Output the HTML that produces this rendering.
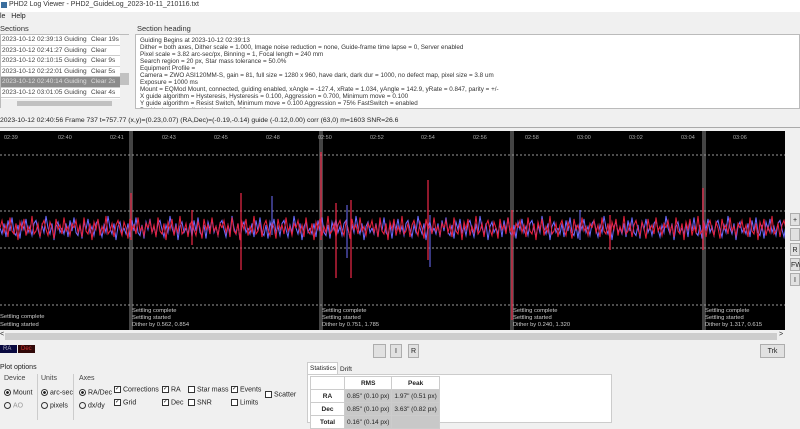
<!DOCTYPE html>
<html><head><meta charset="utf-8"><style>
*{box-sizing:border-box;margin:0;padding:0}
body{width:800px;height:423px;overflow:hidden;background:#f0f0f0;font-family:"Liberation Sans",sans-serif;font-size:7px;color:#222;position:relative}
.a{position:absolute;white-space:nowrap}
.row{height:10.5px;line-height:10px;border-bottom:1px solid #ccc;font-size:6.5px;color:#444;padding-left:1px;position:relative;overflow:hidden}
.row span{position:absolute;left:90px;background:inherit}
.btn{position:absolute;background:#e1e1e1;border:1px solid #adadad;text-align:center;font-size:7px;line-height:13px}
.grp{position:absolute;border-left:1px solid #ccc;top:374px;height:46px}
.rad{display:inline-block;width:7px;height:7px;border-radius:50%;border:1px solid #333;vertical-align:middle;margin-right:2px}
.rad.on{background:radial-gradient(#222 35%,#fff 45%)}
.cb{display:inline-block;width:7px;height:7px;border:1px solid #333;vertical-align:middle;margin-right:2px;font-size:6px;line-height:5px;text-align:center;background:#fff}
td{border:1px solid #ccc;font-size:6.5px;height:13px;padding:0 2px}
</style></head><body>
<div class="a" style="left:0;top:0;width:800px;height:12px;background:#fff"></div>
<div class="a" style="left:1px;top:2px;width:6px;height:6px;background:#3b6e9e"></div>
<div class="a" style="left:9px;top:1px;font-size:7px;color:#333">PHD2 Log Viewer - PHD2_GuideLog_2023-10-11_210116.txt</div>
<div class="a" style="left:0;top:13px;font-size:7px">le &nbsp; Help</div>
<div class="a" style="left:0;top:24px;font-size:7.5px;color:#333">Sections</div>
<div class="a" style="left:137px;top:24px;font-size:7.5px;color:#333">Section heading</div>
<div class="a" style="left:0;top:34px;width:129px;height:74px;background:#fff;border:1px solid #bbb">
<div class="row" style="background:#fff">2023-10-12 02:39:13 Guiding<span>Clear 19s</span></div>
<div class="row" style="background:#fff">2023-10-12 02:41:27 Guiding<span>Clear</span></div>
<div class="row" style="background:#fff">2023-10-12 02:10:15 Guiding<span>Clear 9s</span></div>
<div class="row" style="background:#fff">2023-10-12 02:22:01 Guiding<span>Clear 5s</span></div>
<div class="row" style="background:#8c8c8c;color:#ddd">2023-10-12 02:40:14 Guiding<span>Clear 2s</span></div>
<div class="row" style="background:#fff">2023-10-12 03:01:05 Guiding<span>Clear 4s</span></div>
<div class="a" style="left:119px;top:0;width:9px;height:64px;background:#f0f0f0"><div style="margin-top:38px;height:12px;background:#c1c1c1"></div></div>
<div class="a" style="left:0;top:64px;width:128px;height:9px;background:#f0f0f0"><div style="margin:2px 0 0 16px;width:95px;height:5px;background:#c1c1c1"></div></div>
</div>
<div class="a" style="left:135px;top:34px;width:665px;height:75px;background:#fff;border:1px solid #bbb;font-size:6.3px;line-height:7px;padding:2px 4px;color:#333;overflow:hidden">
Guiding Begins at 2023-10-12 02:39:13<br>
Dither = both axes, Dither scale = 1.000, Image noise reduction = none, Guide-frame time lapse = 0, Server enabled<br>
Pixel scale = 3.82 arc-sec/px, Binning = 1, Focal length = 240 mm<br>
Search region = 20 px, Star mass tolerance = 50.0%<br>
Equipment Profile =<br>
Camera = ZWO ASI120MM-S, gain = 81, full size = 1280 x 960, have dark, dark dur = 1000, no defect map, pixel size = 3.8 um<br>
Exposure = 1000 ms<br>
Mount = EQMod Mount, connected, guiding enabled, xAngle = -127.4, xRate = 1.034, yAngle = 142.9, yRate = 0.847, parity = +/-<br>
X guide algorithm = Hysteresis, Hysteresis = 0.100, Aggression = 0.700, Minimum move = 0.100<br>
Y guide algorithm = Resist Switch, Minimum move = 0.100 Aggression = 75% FastSwitch = enabled<br>
Backlash comp = disabled, pulse = 20 ms
</div>
<div class="a" style="left:0;top:117px;font-size:6.8px;color:#222">2023-10-12 02:40:56 Frame 737 t=757.77 (x,y)=(0.23,0.07) (RA,Dec)=(-0.19,-0.14) guide (-0.12,0.00) corr (63,0) m=1603 SNR=26.6</div>
<div class="a" style="left:0;top:127px;width:800px;height:1px;background:#aaa"></div>
<svg class="a" style="left:0;top:131px" width="785" height="199" viewBox="0 131 785 199">
<defs>
<pattern id="pb" x="0" y="122" width="62" height="60" patternUnits="userSpaceOnUse" patternTransform="scale(1,1.5)"><polyline fill="none" stroke="#6a6aff" stroke-width="1" points="0,30 2,34 4,27 6,36 8,25 10,32 12,23 14,33 16,35 18,28 20,37 22,26 24,31 26,24 28,33 30,29 32,35 34,27 36,25 38,31 40,36 42,28 44,33 46,22 48,30 50,34 52,27 54,38 56,29 58,26 60,33 62,30"/></pattern>
<pattern id="pr" x="0" y="122" width="74" height="60" patternUnits="userSpaceOnUse" patternTransform="scale(1,1.5)"><polyline fill="none" stroke="#e8203c" stroke-width="1" points="0,30 2,25 4,33 6,28 8,36 10,23 12,32 14,34 16,27 18,38 20,26 22,31 24,24 26,35 28,29 30,33 32,22 34,34 36,32 38,27 40,36 42,28 44,25 46,31 48,35 50,26 52,30 54,37 56,24 58,31 60,28 62,34 64,23 66,32 68,29 70,35 72,27 74,30"/></pattern>
</defs>
<rect x="0" y="131" width="785" height="199" fill="#000"/>
<g stroke="#444" stroke-width="4"><line x1="131" y1="131" x2="131" y2="330"/><line x1="321" y1="131" x2="321" y2="330"/><line x1="512" y1="131" x2="512" y2="330"/><line x1="704" y1="131" x2="704" y2="330"/></g>
<g stroke="#999" stroke-dasharray="2,2" stroke-width="1"><line x1="0" y1="155" x2="785" y2="155"/><line x1="0" y1="211" x2="785" y2="211"/><line x1="0" y1="248" x2="785" y2="248"/><line x1="0" y1="305" x2="785" y2="305"/></g>
<rect x="0" y="185" width="785" height="90" fill="url(#pb)"/>
<rect x="0" y="185" width="785" height="90" fill="url(#pr)"/>
<g stroke="#f02848" stroke-width="1.2"><line x1="131" y1="193" x2="131" y2="240"/><line x1="241" y1="193" x2="241" y2="270"/><line x1="321" y1="152" x2="321" y2="240"/><line x1="336" y1="203" x2="336" y2="278"/><line x1="351" y1="200" x2="351" y2="278"/><line x1="428" y1="180" x2="428" y2="260"/><line x1="512" y1="210" x2="512" y2="320"/><line x1="703" y1="188" x2="703" y2="250"/><line x1="192" y1="210" x2="192" y2="245"/><line x1="610" y1="215" x2="610" y2="250"/></g>
<g stroke="#7070ff" stroke-width="1"><line x1="272" y1="196" x2="272" y2="235"/><line x1="347" y1="205" x2="347" y2="258"/><line x1="430" y1="215" x2="430" y2="267"/><line x1="580" y1="210" x2="580" y2="240"/></g>
<g fill="#aaa" font-size="5.5" font-family="Liberation Sans"><text x="4" y="139">02:39</text><text x="58" y="139">02:40</text><text x="110" y="139">02:41</text><text x="162" y="139">02:43</text><text x="214" y="139">02:45</text><text x="266" y="139">02:48</text><text x="318" y="139">02:50</text><text x="370" y="139">02:52</text><text x="421" y="139">02:54</text><text x="473" y="139">02:56</text><text x="525" y="139">02:58</text><text x="577" y="139">03:00</text><text x="629" y="139">03:02</text><text x="681" y="139">03:04</text><text x="733" y="139">03:06</text></g>
<g fill="#ccc" font-size="5.8" font-family="Liberation Sans"><text x="0" y="318">Settling complete</text><text x="0" y="326">Settling started</text>
<text x="132" y="312">Settling complete</text><text x="132" y="319">Settling started</text><text x="132" y="326">Dither by 0.562, 0.854</text>
<text x="322" y="312">Settling complete</text><text x="322" y="319">Settling started</text><text x="322" y="326">Dither by 0.751, 1.785</text>
<text x="513" y="312">Settling complete</text><text x="513" y="319">Settling started</text><text x="513" y="326">Dither by 0.240, 1.320</text>
<text x="705" y="312">Settling complete</text><text x="705" y="319">Settling started</text><text x="705" y="326">Dither by 1.317, 0.615</text></g>
</svg>
<div class="btn" style="left:790px;top:213px;width:10px;height:13px">+</div>
<div class="btn" style="left:790px;top:228px;width:10px;height:13px"></div>
<div class="btn" style="left:790px;top:243px;width:10px;height:13px">R</div>
<div class="btn" style="left:790px;top:258px;width:10px;height:13px">FW</div>
<div class="btn" style="left:790px;top:273px;width:10px;height:13px">I</div>
<div class="a" style="left:5px;top:333px;width:772px;height:7px;background:#cdcdcd"></div>
<div class="a" style="left:0;top:331px;font-size:7px">&lt;</div><div class="a" style="left:779px;top:331px;font-size:7px">&gt;</div>
<div class="a" style="left:0;top:345px;width:17px;height:8px;background:#0a0a40;color:#aab;font-size:6px;line-height:8px;padding-left:3px">RA</div>
<div class="a" style="left:18px;top:345px;width:17px;height:8px;background:#300808;color:#c33;font-size:6px;line-height:8px;padding-left:3px">Dec</div>
<div class="btn" style="left:373px;top:344px;width:13px;height:14px"></div>
<div class="btn" style="left:390px;top:344px;width:12px;height:14px">I</div>
<div class="btn" style="left:408px;top:344px;width:11px;height:14px">R</div>
<div class="btn" style="left:760px;top:344px;width:25px;height:14px">Trk</div>
<div class="a" style="left:0;top:364px;font-size:7px">Plot options</div>
<div class="a" style="left:4px;top:375px;font-size:7px;color:#444">Device</div>
<div class="a" style="left:4px;top:389px;font-size:7px"><span class="rad on"></span>Mount</div>
<div class="a" style="left:4px;top:402px;font-size:7px;color:#999"><span class="rad"></span>AO</div>
<div class="grp" style="left:37px"></div>
<div class="a" style="left:41px;top:375px;font-size:7px;color:#444">Units</div>
<div class="a" style="left:41px;top:389px;font-size:7px"><span class="rad on"></span>arc-sec</div>
<div class="a" style="left:41px;top:402px;font-size:7px"><span class="rad"></span>pixels</div>
<div class="grp" style="left:73px"></div>
<div class="a" style="left:79px;top:375px;font-size:7px;color:#444">Axes</div>
<div class="a" style="left:79px;top:389px;font-size:7px"><span class="rad on"></span>RA/Dec</div>
<div class="a" style="left:79px;top:402px;font-size:7px"><span class="rad"></span>dx/dy</div>
<div class="a" style="left:114px;top:386px;font-size:7px"><span class="cb">✓</span>Corrections</div>
<div class="a" style="left:114px;top:399px;font-size:7px"><span class="cb">✓</span>Grid</div>
<div class="a" style="left:162px;top:386px;font-size:7px"><span class="cb">✓</span>RA</div>
<div class="a" style="left:162px;top:399px;font-size:7px"><span class="cb">✓</span>Dec</div>
<div class="a" style="left:188px;top:386px;font-size:7px"><span class="cb"></span>Star mass</div>
<div class="a" style="left:188px;top:399px;font-size:7px"><span class="cb"></span>SNR</div>
<div class="a" style="left:231px;top:386px;font-size:7px"><span class="cb">✓</span>Events</div>
<div class="a" style="left:231px;top:399px;font-size:7px"><span class="cb"></span>Limits</div>
<div class="a" style="left:265px;top:391px;font-size:7px"><span class="cb"></span>Scatter</div>
<div class="a" style="left:307px;top:362px;width:31px;height:12px;background:#fff;border:1px solid #ccc;border-bottom:none;font-size:6.5px;padding:2px">Statistics</div>
<div class="a" style="left:338px;top:364px;font-size:6.5px;padding:2px">Drift</div>
<div class="a" style="left:307px;top:374px;width:305px;height:49px;background:#fff;border:1px solid #ccc"></div>
<table class="a" style="left:310px;top:376px;border-collapse:collapse;background:#fff">
<tr><td style="width:34px"></td><td style="width:45px;text-align:center;font-weight:bold">RMS</td><td style="width:47px;text-align:center;font-weight:bold">Peak</td></tr>
<tr><td style="text-align:center;font-weight:bold">RA</td><td style="background:#c8c8c8">0.85" (0.10 px)</td><td style="background:#c8c8c8">1.97" (0.51 px)</td></tr>
<tr><td style="text-align:center;font-weight:bold">Dec</td><td style="background:#c8c8c8">0.85" (0.10 px)</td><td style="background:#c8c8c8">3.63" (0.82 px)</td></tr>
<tr><td style="text-align:center;font-weight:bold">Total</td><td style="background:#c8c8c8">0.16" (0.14 px)</td><td style="background:#c8c8c8"></td></tr>
</table>
</body></html>
